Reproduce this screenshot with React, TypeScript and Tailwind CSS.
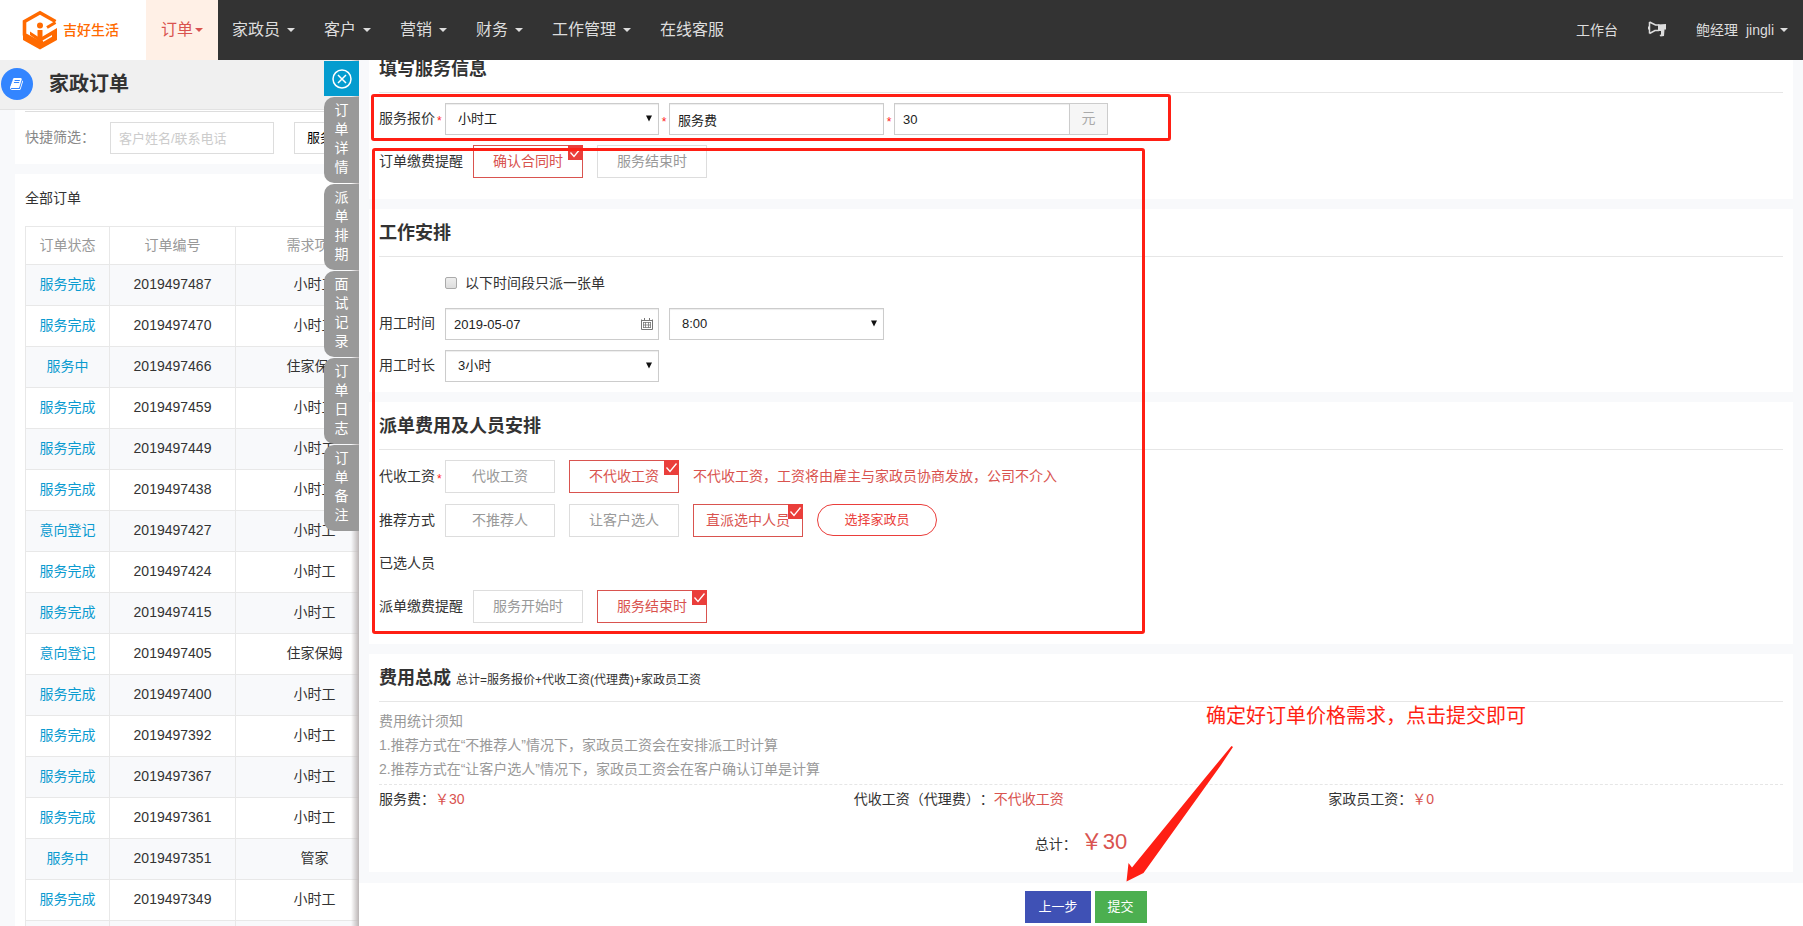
import React from 'react';

const navItems = ['家政员', '客户', '营销', '财务', '工作管理'];

const orders = [
  ['服务完成', '2019497487', '小时工'],
  ['服务完成', '2019497470', '小时工'],
  ['服务中', '2019497466', '住家保姆'],
  ['服务完成', '2019497459', '小时工'],
  ['服务完成', '2019497449', '小时工'],
  ['服务完成', '2019497438', '小时工'],
  ['意向登记', '2019497427', '小时工'],
  ['服务完成', '2019497424', '小时工'],
  ['服务完成', '2019497415', '小时工'],
  ['意向登记', '2019497405', '住家保姆'],
  ['服务完成', '2019497400', '小时工'],
  ['服务完成', '2019497392', '小时工'],
  ['服务完成', '2019497367', '小时工'],
  ['服务完成', '2019497361', '小时工'],
  ['服务中', '2019497351', '管家'],
  ['服务完成', '2019497349', '小时工'],
  ['服务完成', '2019497342', '小时工'],
];

const sideTabs = ['订单详情', '派单排期', '面试记录', '订单日志', '订单备注'];

const fieldClass =
  'h-8 w-full appearance-none rounded-none border border-[#ccc] bg-white text-[13px] text-[#222] shadow-[inset_0_1px_1px_rgba(0,0,0,0.075)] outline-none';

function Caret() {
  return (
    <svg width="8" height="4" viewBox="0 0 8 4" fill="currentColor" aria-hidden="true">
      <path d="M0 0h8L4 4z" />
    </svg>
  );
}

function Logo() {
  return (
    <svg width="36" height="40" viewBox="0 0 36 40" fill="none" stroke="#ff6a00" aria-hidden="true">
      <path d="M33.500 11.500 18 2.800 2.500 11.500v13L18 33l3-1.700" strokeWidth="3.600" strokeLinejoin="miter" />
      <path d="M8 15.500v6L18 28l17-10v12L18 39.500 1 30v-6l17 9.800 12-7v-1.800L18 32 8 25z" fill="#ff6a00" stroke="none" />
      <circle cx="18" cy="15.500" r="3" fill="#ff6a00" stroke="none" />
      <path d="M18 20v10" strokeWidth="5" />
      <path d="M33.500 12.500 25 17.500" strokeWidth="3" />
    </svg>
  );
}

function Star() {
  return <span className="inline-block pt-[6px] text-xs text-[#f22]">*</span>;
}

function SelectBox({ id, label, value }: { id: string; label: string; value: string }) {
  return (
    <div className="relative w-full">
      <select id={id} aria-label={label} className={`${fieldClass} px-3`}>
        <option>{value}</option>
      </select>
      <svg className="pointer-events-none absolute top-3 right-[7px]" width="6" height="7" viewBox="0 0 6 7" aria-hidden="true">
        <path d="M0 0.500h6L3 6.500z" fill="#111" />
      </svg>
    </div>
  );
}

function Choice({ text, on = false }: { text: string; on?: boolean }) {
  return (
    <button
      type="button"
      aria-pressed={on}
      className={
        on
          ? 'relative h-[33px] w-[110px] border border-[#d9534f] bg-white pb-[2px] text-sm text-[#d9534f]'
          : 'relative h-[33px] w-[110px] border border-[#ddd] bg-white pb-[2px] text-sm text-[#999]'
      }
    >
      {text}
      {on && (
        <span className="absolute -top-px -right-px size-[15px] bg-[#ea3e3b]">
          <svg width="15" height="15" viewBox="0 0 15 15" fill="none" stroke="#fff" strokeWidth="1.300" aria-hidden="true">
            <path d="M2.500 7.500 6 11.500l6.500-8" />
          </svg>
        </span>
      )}
    </button>
  );
}

function Card({
  title,
  note,
  className,
  children,
}: {
  title: string;
  note?: string;
  className: string;
  children: React.ReactNode;
}) {
  return (
    <section className={`bg-white px-[10px] ${className}`}>
      <div className="flex h-12 items-center gap-[5px] border-b border-[#e6e6e6]">
        <h2 className="text-lg font-bold">{title}</h2>
        {note && <span className="pt-1 text-xs">{note}</span>}
      </div>
      {children}
    </section>
  );
}

function Row({
  label,
  star,
  wide,
  htmlFor,
  height = 'h-[33px]',
  children,
}: {
  label: string;
  star?: boolean;
  wide?: boolean;
  htmlFor?: string;
  height?: string;
  children?: React.ReactNode;
}) {
  return (
    <div className={`flex items-center ${height}`}>
      <label htmlFor={htmlFor} className={wide ? 'w-[94px] shrink-0 pb-[2px]' : 'flex w-[66px] shrink-0 items-center gap-[2px] pb-[2px]'}>
        {label}
        {star && <Star />}
      </label>
      {children}
    </div>
  );
}

function TopBar() {
  return (
    <header className="flex h-[60px] shrink-0 items-center bg-[#333] text-base text-[#ddd]">
      <a href="#home" className="flex h-full w-[146px] items-center gap-[5px] bg-white pl-[22px] text-sm font-medium text-[#ff6a00]">
        <Logo />
        吉好生活
      </a>
      <nav className="flex h-full items-center">
        <a href="#orders" className="flex h-full items-center gap-[2px] bg-[#fff0e6] px-[15px] text-[#d9534f]">
          订单
          <Caret />
        </a>
        {navItems.map((item) => (
          <a key={item} href="#nav" className="flex h-full items-center gap-[7px] pr-[15px] pl-[14px]">
            {item}
            <Caret />
          </a>
        ))}
        <a href="#service" className="flex h-full items-center px-[14px]">
          在线客服
        </a>
      </nav>
      <div className="ml-auto flex items-center pr-[15px] text-sm">
        <a href="#desk" className="mr-[30px]">
          工作台
        </a>
        <button type="button" aria-label="公告" className="mr-[30px] mb-[2px]">
          <svg width="18" height="16" viewBox="0 0 18 16" aria-hidden="true">
            <path d="M1.500 1v11.500M1.500 1 7.500 4h4M1.500 12.500l5.500-3h4" fill="none" stroke="currentColor" strokeWidth="1.500" />
            <path d="M0 5.500h1.500v3H0zM10 3.500l8-.5v5.500h-1.500l-.5 6.500-3.500.5-1-1.500 1.500-.5V10H10z" fill="currentColor" />
          </svg>
        </button>
        <a href="#user" className="flex items-center gap-[6px]">
          <span className="flex gap-2">
            <span>鲍经理</span>
            <span>jingli</span>
          </span>
          <Caret />
        </a>
      </div>
    </header>
  );
}

function OrderList() {
  return (
    <aside className="relative w-[359px] shrink-0 overflow-hidden bg-[#f8f9fb]">
      <div className="flex h-[50px] items-center gap-4 border-b border-[#e2e2e2] bg-[#f0f0f0] pb-[2px] pl-px">
        <span className="flex size-8 items-center justify-center rounded-full bg-[#3385ff]">
          <svg width="14" height="14" viewBox="0 0 1792 1792" fill="#fff" aria-hidden="true">
            <path d="M1639 478q40 57 18 129l-275 906q-19 64-76.500 107.500t-122.500 43.500h-923q-77 0-148.500-53.500t-99.500-131.500q-24-67-2-127 0-4 3-27t4-37q1-8-3-21.500t-3-19.500q2-11 8-21t16.500-23.500 16.500-23.500q23-38 45-91.500t30-91.500q3-10 .5-30t-.5-28q3-11 17-28t17-23q21-36 42-92t25-90q1-9-2.500-32t.5-28q4-13 22-30.500t22-22.500q19-26 42.500-84.500t27.500-96.500q1-8-3-25.500t-2-26.500q2-8 9-18t18-23 17-21q8-12 16.500-30.500t15-35 16-36 19.500-32 26.500-23.500 36-11.500 47.500 5.500l-1 3q38-9 51-9h761q74 0 114 56t18 130l-274 906q-36 119-71.500 153.500t-128.500 34.500h-869q-27 0-38 15-11 16-1 43 24 70 144 70h923q29 0 56-15.500t35-41.500l300-987q7-22 5-57 38 15 59 43zm-1064 2q-4 13 2 22.500t20 9.500h608q13 0 25.500-9.500t16.500-22.500l21-64q4-13-2-22.500t-20-9.500h-608q-13 0-25.500 9.500t-16.500 22.500zm-83 256q-4 13 2 22.500t20 9.500h608q13 0 25.500-9.500t16.500-22.500l21-64q4-13-2-22.500t-20-9.500h-608q-13 0-25.500 9.500t-16.500 22.500z" />
          </svg>
        </span>
        <h1 className="text-xl font-bold">家政订单</h1>
      </div>

      <div className="ml-[15px] h-[54px] bg-white pt-px pl-[10px]">
        <div className="flex h-full border-t border-[#ddd] pt-[10px]">
          <label htmlFor="keyword" className="w-[85px] shrink-0 text-sm leading-[30px] text-[#888]">
            快捷筛选：
          </label>
          <input
            id="keyword"
            placeholder="客户姓名/联系电话"
            className="h-8 w-[164px] shrink-0 border border-[#ddd] px-2 text-[13px] placeholder:text-[#ccc]"
          />
          <select
            aria-label="服务类型"
            className="ml-5 h-8 w-40 shrink-0 appearance-none border border-[#ddd] bg-white px-3 text-[13px] text-black"
          >
            <option>服务类型</option>
          </select>
        </div>
      </div>

      <div className="mt-[10px] ml-[15px] bg-white pl-[10px]">
        <div className="h-[52px] text-sm leading-[48px]">全部订单</div>
        <table className="w-[369px] table-fixed border-collapse text-center text-sm">
          <thead>
            <tr className="h-[38px] text-[#999]">
              <th className="w-[84px] border border-[#e8e8e8] pb-[2px] font-normal">订单状态</th>
              <th className="w-[126px] border border-[#e8e8e8] pb-[2px] font-normal">订单编号</th>
              <th className="border border-[#e8e8e8] pb-[2px] font-normal">需求项目</th>
            </tr>
          </thead>
          <tbody>
            {orders.map(([state, no, kind]) => (
              <tr key={no} className="h-[41px] odd:bg-[#f8f9fb]">
                <td className="border border-[#e8e8e8] pb-[3px]">
                  <a href="#order" className="text-[#0a9bd0]">
                    {state}
                  </a>
                </td>
                <td className="border border-[#e8e8e8] pb-[3px]">{no}</td>
                <td className="border border-[#e8e8e8] pb-[3px]">{kind}</td>
              </tr>
            ))}
          </tbody>
        </table>
      </div>

      <div className="absolute inset-y-0 right-0 w-2 bg-linear-to-r from-transparent to-[#bbb5b5]" />
      <div className="absolute top-px right-0 flex w-[35px] flex-col gap-px">
        <button type="button" aria-label="关闭" className="flex h-[35px] items-center justify-center bg-[#049ccf]">
          <svg width="20" height="20" viewBox="0 0 20 20" fill="none" stroke="#fff" strokeWidth="1.500" aria-hidden="true">
            <circle cx="10" cy="10" r="9" />
            <path d="m6 6 8 8M14 6l-8 8" />
          </svg>
        </button>
        {sideTabs.map((tab) => (
          <button key={tab} type="button" className="flex h-[86px] items-center justify-center rounded-l-[10px] bg-[#999] pb-[2px] text-white">
            <span className="w-[14px] text-sm leading-[19px] break-all">{tab}</span>
          </button>
        ))}
      </div>
    </aside>
  );
}

function OrderForm() {
  return (
    <main className="flex min-w-0 flex-1 flex-col bg-[#f8f9fb]">
      <div className="overflow-hidden px-[10px] pb-[11px] text-sm">
        <div className="-mt-[15px] flex flex-col gap-[10px]">
          <Card title="填写服务信息" className="pb-[21px]">
            <div className="flex flex-col gap-[10px] pt-[10px]">
              <Row label="服务报价" star htmlFor="service-kind" height="h-8">
                <div className="w-[214px]">
                  <SelectBox id="service-kind" label="服务报价" value="小时工" />
                </div>
                <span className="w-[10px] text-center">
                  <Star />
                </span>
                <input aria-label="费用名称" defaultValue="服务费" className={`${fieldClass} max-w-[215px] px-2`} />
                <span className="w-[10px] text-center">
                  <Star />
                </span>
                <div className="flex w-[214px]">
                  <input aria-label="金额" defaultValue="30" className={`${fieldClass} px-2`} />
                  <span className="flex h-8 w-[38px] shrink-0 items-center justify-center border border-l-0 border-[#ccc] bg-[#f6f6f6] pb-[2px] text-[#aaa]">
                    元
                  </span>
                </div>
              </Row>
              <Row label="订单缴费提醒" wide>
                <div className="flex gap-[14px]">
                  <Choice text="确认合同时" on />
                  <Choice text="服务结束时" />
                </div>
              </Row>
            </div>
          </Card>

          <Card title="工作安排" className="pb-[10px]">
            <div className="flex flex-col gap-[10px] pt-[10px]">
              <div className="flex h-[31px] items-center pl-[66px]">
                <input
                  id="single"
                  type="checkbox"
                  className="mr-2 size-3 appearance-none rounded-[2px] border border-[#aaa] bg-linear-to-b from-[#eee] to-[#ddd]"
                />
                <label htmlFor="single">以下时间段只派一张单</label>
              </div>
              <Row label="用工时间" htmlFor="work-date" height="h-8">
                <div className="relative w-[214px]">
                  <input id="work-date" defaultValue="2019-05-07" className={`${fieldClass} px-2`} />
                  <svg
                    className="pointer-events-none absolute top-[10px] right-[6px]"
                    width="12"
                    height="12"
                    viewBox="0 0 12 12"
                    fill="none"
                    stroke="#777"
                    aria-hidden="true"
                  >
                    <path d="M.5 1.500v10h11v-10M0 2.500h12M3.500 0v2M8.500 0v2" />
                    <path d="M2.500 4v6M4.500 4v6M7.500 4v6M9.500 4v6M2 4.500h8M2 7h8M2 9.500h8" strokeWidth=".8" />
                  </svg>
                </div>
                <div className="ml-[10px] w-[215px]">
                  <SelectBox id="work-hour" label="开始时间" value="8:00" />
                </div>
              </Row>
              <Row label="用工时长" htmlFor="work-length" height="h-8">
                <div className="w-[214px]">
                  <SelectBox id="work-length" label="用工时长" value="3小时" />
                </div>
              </Row>
            </div>
          </Card>

          <Card title="派单费用及人员安排" className="pb-[21px]">
            <div className="flex flex-col gap-[11px] pt-[10px]">
              <Row label="代收工资" star>
                <div className="flex items-center gap-[14px]">
                  <Choice text="代收工资" />
                  <Choice text="不代收工资" on />
                  <span className="pb-[2px] text-[#d9534f]">不代收工资，工资将由雇主与家政员协商发放，公司不介入</span>
                </div>
              </Row>
              <Row label="推荐方式">
                <div className="flex gap-[14px]">
                  <Choice text="不推荐人" />
                  <Choice text="让客户选人" />
                  <Choice text="直派选中人员" on />
                  <button type="button" className="h-8 w-[120px] rounded-full border border-[#ea3e3b] text-[13px] text-[#ea3e3b]">
                    选择家政员
                  </button>
                </div>
              </Row>
              <Row label="已选人员" height="h-[31px]" />
              <Row label="派单缴费提醒" wide>
                <div className="flex gap-[14px]">
                  <Choice text="服务开始时" />
                  <Choice text="服务结束时" on />
                </div>
              </Row>
            </div>
          </Card>

          <Card title="费用总成" note="总计=服务报价+代收工资(代理费)+家政员工资" className="pb-3">
            <div className="border-b border-dashed border-[#e6e6e6] pt-[7px] pb-[3px] leading-6 text-[#999]">
              <p>费用统计须知</p>
              <p>1.推荐方式在“不推荐人”情况下，家政员工资会在安排派工时计算</p>
              <p>2.推荐方式在“让客户选人”情况下，家政员工资会在客户确认订单是计算</p>
            </div>
            <div className="-mr-5 grid grid-cols-3 leading-7 [text-spacing-trim:space-all]">
              <p>
                服务费：<span className="text-[#d9534f]">￥30</span>
              </p>
              <p>
                代收工资（代理费）：<span className="text-[#d9534f]">不代收工资</span>
              </p>
              <p>
                家政员工资：<span className="text-[#d9534f]">￥0</span>
              </p>
            </div>
            <div className="flex h-[47px] items-baseline justify-center gap-1 leading-[57px]">
              <span>总计：</span>
              <span className="text-[22px] text-[#d9534f]">￥30</span>
            </div>
          </Card>
        </div>
      </div>
      <footer className="flex flex-1 items-start justify-center gap-1 bg-white pt-2 pl-[10px] text-[13px] text-white">
        <button type="button" className="h-8 bg-[#3f51b5] px-[13px]">
          上一步
        </button>
        <button type="button" className="h-8 bg-[#4caf50] px-[13px]">
          提交
        </button>
      </footer>
    </main>
  );
}

/* Red guide marks drawn over the form */
function GuideMarks() {
  return (
    <div className="pointer-events-none absolute inset-0 overflow-hidden">
      <div className="absolute top-[94px] left-[371px] h-[47px] w-[800px] rounded-[3px] border-3 border-[#ff1f14]" />
      <div className="absolute top-[148px] left-[372px] h-[486px] w-[773px] rounded-[3px] border-3 border-[#ff1f14]" />
      <p className="absolute top-[701px] left-[1206px] text-xl leading-[30px] whitespace-nowrap text-[#ff1f14]">
        确定好订单价格需求，点击提交即可
      </p>
      <svg className="absolute top-[745px] left-[1125px]" width="110" height="138" viewBox="0 0 110 138" aria-hidden="true">
        <path d="M106.500 1 108 2 96 20 18.500 128 1.500 136.500 3.500 118 7 122.500 80 33z M7 122.500 18.500 128z" fill="#ff1f14" />
      </svg>
    </div>
  );
}

export default function App() {
  return (
    <div className="relative flex h-screen flex-col overflow-hidden bg-white font-['Liberation_Sans','Noto_Sans_CJK_SC',sans-serif] text-[#333]">
      <TopBar />
      <div className="flex min-h-0 flex-1">
        <OrderList />
        <OrderForm />
      </div>
      <GuideMarks />
    </div>
  );
}
